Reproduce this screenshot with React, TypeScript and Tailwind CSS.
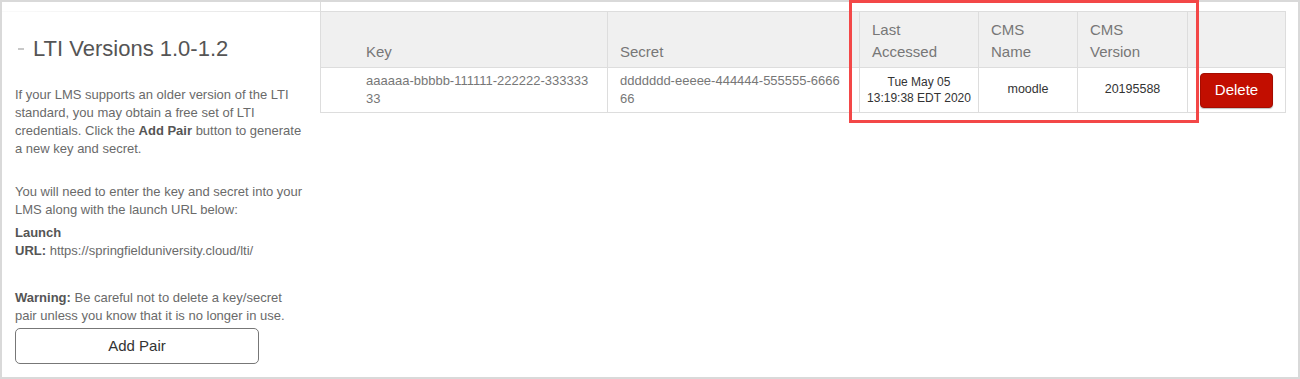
export default function App() {
  return (
    <div className="relative w-[1300px] h-[379px] border-2 border-[#d9d9d9] bg-white flex font-['Liberation_Sans',Arial,sans-serif]">
      {/* Left column */}
      <div className="w-[318px] shrink-0 flex flex-col">
        <div className="h-[9px]" />
        <div className="h-px bg-linear-to-r from-[#fafafa] to-[#e3e3e3]" />
        <div className="pl-[13px] pr-[10px]">
          <div className="mt-[22px] flex items-center h-[30px]">
            <span className="block w-[6px] h-[2px] bg-[#c8c8c8] ml-[3px] mr-[9px]" />
            <h2 className="text-[22px] leading-[30px] text-[#555]">LTI Versions 1.0-1.2</h2>
          </div>
          <p className="mt-[22px] text-[13px] leading-[18px] text-[#6a6a6a]">
            If your LMS supports an older version of the LTI standard, you may obtain a free set of LTI
            credentials. Click the <b className="text-[#555]">Add Pair</b> button to generate a new key and secret.
          </p>
          <p className="mt-[25px] text-[13px] leading-[18px] text-[#6a6a6a]">
            You will need to enter the key and secret into your LMS along with the launch URL below:
          </p>
          <p className="mt-[5px] text-[13px] leading-[18px] text-[#6a6a6a]">
            <b className="text-[#555]">Launch</b>
            <br />
            <b className="text-[#555]">URL:</b> https://springfielduniversity.cloud/lti/
          </p>
          <p className="mt-[29px] text-[13px] leading-[18px] text-[#6a6a6a]">
            <b className="text-[#555]">Warning:</b> Be careful not to delete a key/secret
            <br />
            pair unless you know that it is no longer in use.
          </p>
          <button className="mt-[3px] w-[244px] h-[36px] border border-[#777] rounded-[5px] bg-white text-[15px] text-[#333]">
            Add Pair
          </button>
        </div>
      </div>

      {/* Right column */}
      <div className="flex-1 flex flex-col">
        <div className="h-[9px] border-l border-[#ddd]" />
        <table className="table-fixed border-collapse w-[965px] border border-[#ddd]">
          <colgroup>
            <col className="w-[287px]" />
            <col className="w-[252px]" />
            <col className="w-[119px]" />
            <col className="w-[99px]" />
            <col className="w-[110px]" />
            <col className="w-[98px]" />
          </colgroup>
          <thead>
            <tr className="bg-[#f0f0f0] text-[15px] leading-[22px] text-[#777]">
              <th className="font-normal text-left align-bottom border border-[#ddd] pl-[45px] pt-[7px] pb-[4px]">Key</th>
              <th className="font-normal text-left align-bottom border border-[#ddd] pl-[12px] pt-[7px] pb-[4px]">Secret</th>
              <th className="font-normal text-left align-bottom border border-[#ddd] pl-[12px] pt-[7px] pb-[4px]">
                Last
                <br />
                Accessed
              </th>
              <th className="font-normal text-left align-bottom border border-[#ddd] pl-[12px] pt-[7px] pb-[4px]">
                CMS
                <br />
                Name
              </th>
              <th className="font-normal text-left align-bottom border border-[#ddd] pl-[12px] pt-[7px] pb-[4px]">
                CMS
                <br />
                Version
              </th>
              <th className="border border-[#ddd]" />
            </tr>
          </thead>
          <tbody>
            <tr className="h-[45px]">
              <td className="border border-[#ddd] pl-[45px] text-[13px] leading-[18px] text-[#777] align-middle">
                <span className="whitespace-nowrap">aaaaaa-bbbbb-111111-222222-333333</span>
                <br />
                33
              </td>
              <td className="border border-[#ddd] pl-[12px] text-[13px] leading-[18px] text-[#777] align-middle">
                <span className="whitespace-nowrap">ddddddd-eeeee-444444-555555-6666</span>
                <br />
                66
              </td>
              <td className="border border-[#ddd] text-center text-[12px] leading-[16px] text-[#333] align-middle">
                Tue May 05
                <br />
                <span className="whitespace-nowrap">13:19:38 EDT 2020</span>
              </td>
              <td className="border border-[#ddd] text-center text-[12.5px] leading-[16px] text-[#333] align-middle pb-[3px]">
                moodle
              </td>
              <td className="border border-[#ddd] text-center text-[12.5px] leading-[16px] text-[#333] align-middle pb-[3px]">
                20195588
              </td>
              <td className="border border-[#ddd] pl-[12px] align-middle">
                <button className="w-[73px] h-[35px] bg-[#c20e00] border border-[#a50c00] rounded-[4px] text-white text-[15px] shadow-[0_1px_1px_rgba(0,0,0,0.25)]">
                  Delete
                </button>
              </td>
            </tr>
          </tbody>
        </table>
      </div>

      {/* Annotation highlight */}
      <div className="absolute left-[847px] top-[-2px] w-[350px] h-[123px] border-[3px] border-[#f34747] pointer-events-none" />
    </div>
  );
}
